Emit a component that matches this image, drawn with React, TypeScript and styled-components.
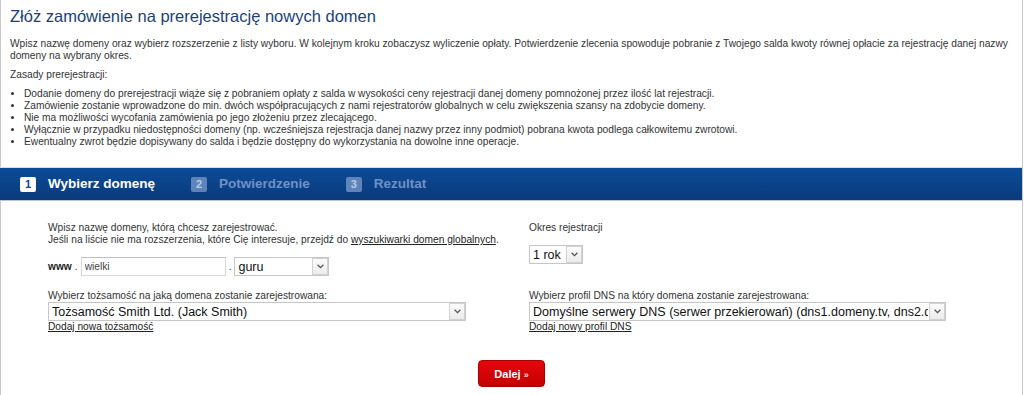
import React, { useState } from 'react'
import styled, { createGlobalStyle } from 'styled-components'

//#region : styled-components
const GlobalStyle = createGlobalStyle`
  html, body {
    margin: 0;
    padding: 0;
    background: #fff;
  }
  * {
    box-sizing: border-box;
  }
`

const Page = styled.div`
  width: 1023px;
  min-height: 395px;
  border-left: 1px solid #c9c9c9;
  border-right: 1px solid #c9c9c9;
  background: #fff;
  color: #333;
  font-family: "Liberation Sans", Arial, sans-serif;
  font-size: 10.2px;
  line-height: 12px;
`

const Intro = styled.div`
  padding: 6px 10px 0 9px;
`

const Title = styled.h1`
  margin: 0;
  font-size: 16.5px;
  line-height: 20px;
  font-weight: normal;
  color: #1c3f7b;
`

const Paragraph = styled.p<{ $top: number }>`
  margin: ${({ $top }) => $top}px 0 0;
`

const Rules = styled.ul`
  margin: 7px 0 0;
  padding: 0 0 0 14px;
  list-style: disc;
`

const StepsBar = styled.div`
  margin: 19px 0 0 -1px;
  height: 34px;
  display: flex;
  align-items: center;
  gap: 36px;
  padding-left: 20px;
  background: linear-gradient(#0c4b97, #0a3a7b);
  border-top: 1px solid #d9dfe8;
  border-bottom: 1px solid #b9c5d7;
`

const Step = styled.div<{ $active?: boolean }>`
  display: flex;
  align-items: center;
  gap: 12px;
  font-size: 13.5px;
  font-weight: bold;
  color: ${({ $active }) => ($active ? '#fff' : '#6f90c4')};
`

const StepNum = styled.span<{ $active?: boolean }>`
  width: 16px;
  height: 15px;
  border-radius: 2px;
  display: flex;
  align-items: center;
  justify-content: center;
  font-size: 11px;
  font-weight: bold;
  background: ${({ $active }) => ($active ? '#fff' : '#5f84ba')};
  color: ${({ $active }) => ($active ? '#0c4a93' : '#b9cbe4')};
`

const Form = styled.div`
  display: grid;
  grid-template-columns: 481px 1fr;
  row-gap: 14px;
  padding: 21px 0 0 47px;
`

const Column = styled.div`
  display: flex;
  flex-direction: column;
  align-items: flex-start;
`

const Label = styled.div<{ $gap?: number }>`
  margin-bottom: ${({ $gap }) => $gap ?? 0}px;
`

const DomainRow = styled.div`
  display: flex;
  align-items: center;
  margin-top: 11px;
  height: 19px;
`

const Www = styled.span`
  font-weight: bold;
  color: #222;
`

const Dot = styled.span`
  margin: 0 3px 0 3px;
`

const TextInput = styled.input`
  width: 145px;
  height: 19px;
  margin: 0;
  padding: 0 3px;
  border: 1px solid #d8d8d8;
  border-top-color: #bfbfbf;
  font-family: "Liberation Sans", Arial, sans-serif;
  font-size: 10.2px;
  color: #444;
  &:focus {
    outline: none;
  }
`

const SelectWrap = styled.span<{ $w: number }>`
  position: relative;
  display: inline-block;
  width: ${({ $w }) => $w}px;
  height: 19px;
`

const NativeSelect = styled.select`
  appearance: none;
  -webkit-appearance: none;
  width: 100%;
  height: 100%;
  margin: 0;
  padding: 0 17px 0 3px;
  border: 1px solid #c6c6c6;
  border-radius: 0;
  background: #fff;
  font-family: "Liberation Sans", Arial, sans-serif;
  font-size: 12.5px;
  color: #111;
  &:focus {
    outline: none;
  }
`

const Arrow = styled.span`
  position: absolute;
  top: 1px;
  right: 1px;
  bottom: 1px;
  width: 16px;
  border: 1px solid #d2d2d2;
  background: linear-gradient(#fcfcfc, #ebebeb);
  display: flex;
  align-items: center;
  justify-content: center;
  pointer-events: none;
`

const Link = styled.a`
  color: #222;
  text-decoration: underline;
  cursor: pointer;
`

const Footer = styled.div`
  display: flex;
  justify-content: center;
  padding-top: 27px;
`

const NextButton = styled.button`
  width: 67px;
  height: 27px;
  padding: 0;
  border: 1px solid #a90000;
  border-radius: 4px;
  background: linear-gradient(#e5070d, #c40000);
  color: #fff;
  font-family: "Liberation Sans", Arial, sans-serif;
  font-size: 11px;
  font-weight: bold;
  cursor: pointer;
  span {
    font-size: 9px;
    margin-left: 3px;
    opacity: 0.85;
  }
`
//#endregion

type SelectProps = { width: number, value: string, options: string[], onChange: (v: string) => void }

const Select = ({ width, value, options, onChange }: SelectProps) => (
    <SelectWrap $w={width}>
        <NativeSelect value={value} onChange={(e) => onChange(e.target.value)}>
            {options.map(o => <option key={o} value={o}>{o}</option>)}
        </NativeSelect>
        <Arrow>
            <svg width="7" height="5" viewBox="0 0 7 5">
                <path d="M0.6 0.8 L3.5 3.7 L6.4 0.8" fill="none" stroke="#555" strokeWidth="1.3" />
            </svg>
        </Arrow>
    </SelectWrap>
)

const rules = [
    'Dodanie domeny do prerejestracji wiąże się z pobraniem opłaty z salda w wysokości ceny rejestracji danej domeny pomnożonej przez ilość lat rejestracji.',
    'Zamówienie zostanie wprowadzone do min. dwóch współpracujących z nami rejestratorów globalnych w celu zwiększenia szansy na zdobycie domeny.',
    'Nie ma możliwości wycofania zamówienia po jego złożeniu przez zlecającego.',
    'Wyłącznie w przypadku niedostępności domeny (np. wcześniejsza rejestracja danej nazwy przez inny podmiot) pobrana kwota podlega całkowitemu zwrotowi.',
    'Ewentualny zwrot będzie dopisywany do salda i będzie dostępny do wykorzystania na dowolne inne operacje.',
]

const steps = ['Wybierz domenę', 'Potwierdzenie', 'Rezultat']

const App = () => {
    const [name, setName] = useState('wielki')
    const [tld, setTld] = useState('guru')
    const [period, setPeriod] = useState('1 rok')
    const [identity, setIdentity] = useState('Tożsamość Smith Ltd. (Jack Smith)')
    const [dns, setDns] = useState('Domyślne serwery DNS (serwer przekierowań) (dns1.domeny.tv, dns2.domeny.tv)')

    return (
        <>
            <GlobalStyle />
            <Page>
                <Intro>
                    <Title>Złóż zamówienie na prerejestrację nowych domen</Title>
                    <Paragraph $top={12}>
                        Wpisz nazwę domeny oraz wybierz rozszerzenie z listy wyboru. W kolejnym kroku zobaczysz wyliczenie opłaty. Potwierdzenie zlecenia spowoduje pobranie z Twojego salda kwoty równej opłacie za rejestrację danej nazwy domeny na wybrany okres.
                    </Paragraph>
                    <Paragraph $top={7}>Zasady prerejestracji:</Paragraph>
                    <Rules>
                        {rules.map(r => <li key={r}>{r}</li>)}
                    </Rules>
                </Intro>

                <StepsBar>
                    {steps.map((s, i) => (
                        <Step key={s} $active={i === 0}>
                            <StepNum $active={i === 0}>{i + 1}</StepNum>
                            {s}
                        </Step>
                    ))}
                </StepsBar>

                <Form>
                    <Column>
                        <Label>
                            Wpisz nazwę domeny, którą chcesz zarejestrować.<br />
                            Jeśli na liście nie ma rozszerzenia, które Cię interesuje, przejdź do <Link>wyszukiwarki domen globalnych</Link>.
                        </Label>
                        <DomainRow>
                            <Www>www</Www>
                            <Dot>.</Dot>
                            <TextInput value={name} onChange={(e) => setName(e.target.value)} />
                            <Dot>.</Dot>
                            <Select width={95} value={tld} options={['guru', 'club', 'photography']} onChange={setTld} />
                        </DomainRow>
                    </Column>
                    <Column>
                        <Label $gap={11}>Okres rejestracji</Label>
                        <Select width={54} value={period} options={['1 rok', '2 lata', '3 lata']} onChange={setPeriod} />
                    </Column>

                    <Column>
                        <Label>Wybierz tożsamość na jaką domena zostanie zarejestrowana:</Label>
                        <Select width={418} value={identity} options={[identity]} onChange={setIdentity} />
                        <Link>Dodaj nowa tożsamość</Link>
                    </Column>
                    <Column>
                        <Label>Wybierz profil DNS na który domena zostanie zarejestrowana:</Label>
                        <Select width={417} value={dns} options={[dns]} onChange={setDns} />
                        <Link>Dodaj nowy profil DNS</Link>
                    </Column>
                </Form>

                <Footer>
                    <NextButton>Dalej<span>»</span></NextButton>
                </Footer>
            </Page>
        </>
    )
}

export default App
